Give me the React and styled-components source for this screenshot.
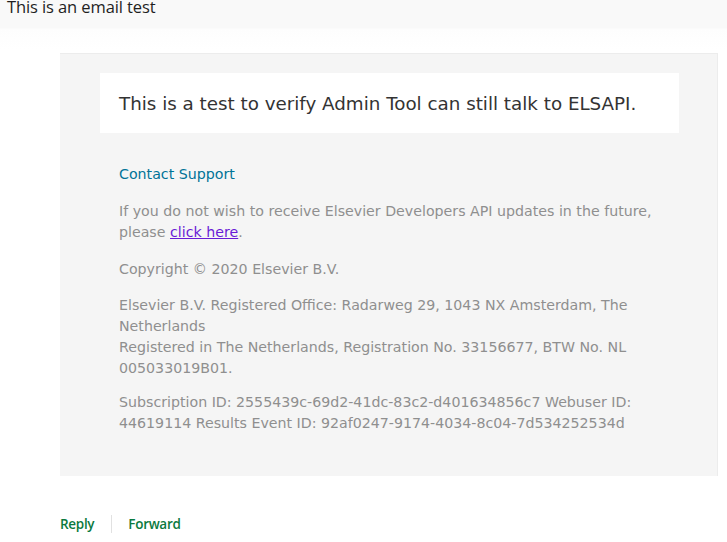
import React from "react";
import styled, { createGlobalStyle } from "styled-components";

const Global = createGlobalStyle`
  html, body { margin: 0; padding: 0; background: #ffffff; }
  body { font-family: "Open Sans", "Noto Sans", sans-serif; }
`;

const Page = styled.div`
  width: 727px;
  height: 542px;
  overflow: hidden;
  background: linear-gradient(#f9f9f9 0px, #f9f9f9 28px, #fdfdfd 29px, #ffffff 50px);
`;

const Header = styled.div`
  height: 28px;
  padding-left: 7px;
  overflow: hidden;
`;

const Subject = styled.h1`
  margin: -4px 0 0 0;
  font-family: "Open Sans", "Noto Sans", sans-serif;
  font-weight: 400;
  font-size: 16.5px;
  line-height: 22px;
  color: #1f1f1f;
  letter-spacing: -0.1px;
`;

const Panel = styled.div`
  margin: 25px 0 0 60px;
  width: 658px;
  box-sizing: border-box;
  background: #f5f5f5;
  border-top: 1px solid #ececec;
  border-right: 1px solid #ececec;
  padding: 19px 38px 42px 40px;
  font-family: "DejaVu Sans", Verdana, sans-serif;
`;

const Intro = styled.div`
  background: #ffffff;
  height: 60px;
  display: flex;
  align-items: center;
  padding-left: 19px;
  font-size: 18.3px;
  color: #333333;
`;

const Body = styled.div`
  padding: 31px 19px 0 19px;
  font-size: 14.2px;
  line-height: 21px;
  color: #8f8f8f;
`;

const Para = styled.p`
  margin: ${(p) => p.$top ?? 16}px 0 0 0;
`;

const SupportLink = styled.a`
  color: #007398;
  text-decoration: none;
`;

const Unsub = styled.a`
  color: #6a1bd6;
  text-decoration: underline;
`;

const Actions = styled.div`
  display: flex;
  align-items: center;
  margin: 38px 0 0 60px;
  font-family: "Open Sans", "Noto Sans", sans-serif;
  font-weight: 600;
  font-size: 13.5px;
  color: #0b7a3e;
  letter-spacing: -0.3px;
`;

const Action = styled.span`
  line-height: 20px;
`;

const Divider = styled.span`
  width: 1px;
  height: 18px;
  background: #e1e1e1;
  margin: 0 16px 0 17px;
`;

export default function App() {
  return (
    <>
      <Global />
      <Page>
        <Header>
          <Subject>This is an email test</Subject>
        </Header>
        <Panel>
          <Intro>This is a test to verify Admin Tool can still talk to ELSAPI.</Intro>
          <Body>
            <Para $top={0}>
              <SupportLink href="#">Contact Support</SupportLink>
            </Para>
            <Para>
              If you do not wish to receive Elsevier Developers API updates in the future,
              please <Unsub href="#">click here</Unsub>.
            </Para>
            <Para>Copyright © 2020 Elsevier B.V.</Para>
            <Para $top={15}>
              Elsevier B.V. Registered Office: Radarweg 29, 1043 NX Amsterdam, The Netherlands
              <br />
              Registered in The Netherlands, Registration No. 33156677, BTW No. NL 005033019B01.
            </Para>
            <Para $top={13}>
              Subscription ID: 2555439c-69d2-41dc-83c2-d401634856c7 Webuser ID: 44619114
              Results Event ID: 92af0247-9174-4034-8c04-7d534252534d
            </Para>
          </Body>
        </Panel>
        <Actions>
          <Action>Reply</Action>
          <Divider />
          <Action>Forward</Action>
        </Actions>
      </Page>
    </>
  );
}
